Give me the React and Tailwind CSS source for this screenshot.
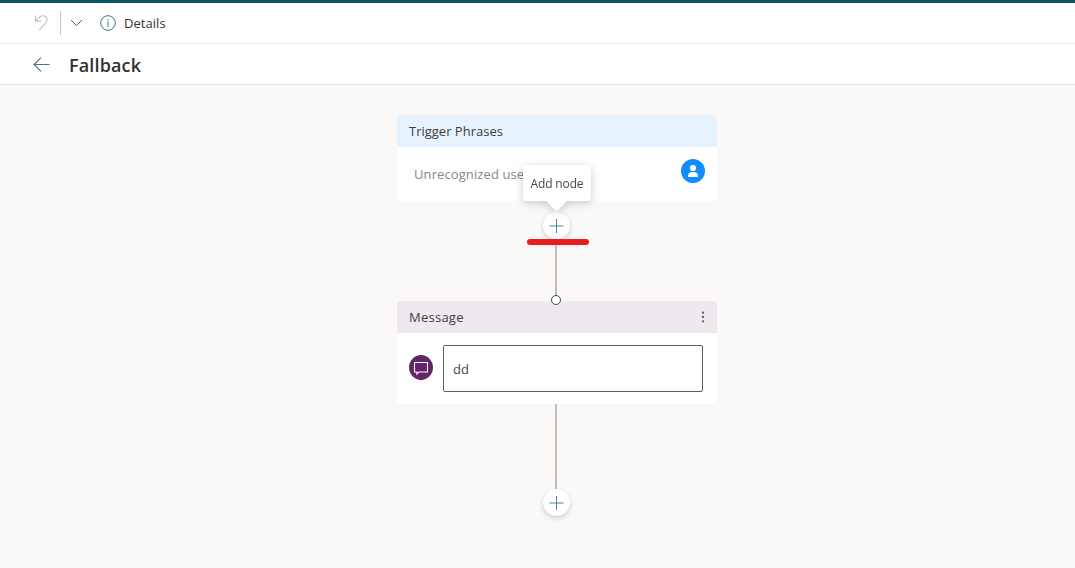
import React from 'react';

function UndoIcon() {
  return (
    <svg className="h-[18px] w-[16px]" viewBox="0 0 16 18" fill="none" stroke="#c4c2c0" strokeWidth="1.2">
      <path d="M1.500 1.500v5.700h5.700M1.800 6.900 5.600 3.100c1.700-1.700 4.500-1.800 6.200-.2s1.800 4.300.1 6L5.200 16" />
    </svg>
  );
}

function PlusButton() {
  return (
    <button className="flex h-[27px] w-[27px] shrink-0 items-center justify-center rounded-full bg-white shadow-[0_2px_5px_rgba(0,0,0,0.18)]">
      <svg className="h-[15px] w-[15px]" viewBox="0 0 15 15" fill="none">
        <path d="M0.500 8h14" stroke="#a5c4ce" strokeWidth="2" />
        <path d="M7.500 1v14" stroke="#43899e" strokeWidth="1" />
      </svg>
    </button>
  );
}

function Tooltip() {
  return (
    <div className="absolute bottom-[38px] -left-[20px] z-10 flex h-9 w-[68px] items-center justify-center rounded-sm bg-white drop-shadow-[0_2px_4px_rgba(0,0,0,0.2)]">
      <span className="pt-[2px] text-[12px] tracking-[-0.15px] whitespace-nowrap text-[#484644]">Add node</span>
      <svg className="absolute top-[35px] left-[22px] h-[12px] w-[23px]" viewBox="0 0 23 12">
        <path d="M0 0h23L11.500 11.500Z" fill="#fff" />
      </svg>
    </div>
  );
}

function TriggerCard() {
  return (
    <section className="w-[320px] overflow-hidden rounded-t-sm bg-white">
      <header className="flex h-8 items-center bg-[#e6f2fe] px-3 pt-[2px] text-[13px] text-[#3f3e3c]">Trigger Phrases</header>
      <div className="flex h-[54px] items-start justify-between pr-3 pl-[17px]">
        <span className="mt-[17px] text-[13px] leading-5 tracking-[0.1px] text-[#8a8886]">Unrecognized user</span>
        <svg className="mt-3 h-6 w-6" viewBox="0 0 24 24">
          <circle cx="12" cy="12" r="12" fill="#118dff" />
          <circle cx="12" cy="9" r="3.100" fill="#fff" />
          <path d="M7 18v-1c0-2.500 1.800-4 4-4h2c2.200 0 4 1.500 4 4v1Z" fill="#fff" />
        </svg>
      </div>
    </section>
  );
}

function MessageCard() {
  return (
    <section className="relative w-[320px] bg-white">
      <span className="absolute -top-[6px] left-[154px] h-[10px] w-[10px] rounded-full border border-[#484644] bg-white" />
      <header className="flex h-8 items-center justify-between rounded-t-sm bg-[#efe8ef] px-3 text-[13px] text-[#3f3e3c]">
        <span className="pt-[2px] tracking-[0.25px]">Message</span>
        <svg className="h-[12px] w-[4px]" viewBox="0 0 4 12" fill="#605e5c">
          <circle cx="2" cy="1.700" r="1.150" />
          <circle cx="2" cy="6" r="1.150" />
          <circle cx="2" cy="10.300" r="1.150" />
        </svg>
      </header>
      <div className="flex h-[71px] items-start gap-[10px] pt-3 pl-3">
        <svg className="mt-[10px] h-[25px] w-6" viewBox="0 0 24 25" fill="none">
          <ellipse cx="12" cy="12.500" rx="12" ry="12.500" fill="#642469" />
          <path d="M5.500 7.500h13v9.500h-8.500l-2 2.200V17H5.500Z" stroke="#fff" strokeWidth="1.100" />
        </svg>
        <div className="flex h-[47px] w-[260px] items-center rounded-xs border border-[#605e5c] px-[9px] pt-[2px] text-[13px] text-[#484644]">dd</div>
      </div>
    </section>
  );
}

export default function App() {
  return (
    <div className="flex h-[568px] w-[1075px] flex-col overflow-hidden bg-[#faf9f8] font-['Open_Sans','Noto_Sans',sans-serif] text-[#323130]">
      <div className="flex h-11 shrink-0 items-center border-t-[3px] border-b border-t-[#0b556a] border-b-[#edebe9] bg-white pl-[34px]">
        <UndoIcon />
        <span className="ml-[10px] h-6 w-px bg-[#c8c6c4]" />
        <svg className="ml-[9px] h-[8px] w-[13px]" viewBox="0 0 13 8" fill="none" stroke="#73642f">
          <path d="m1 1 5.500 5.500L12 1" />
        </svg>
        <svg className="ml-[17px] h-4 w-4" viewBox="0 0 16 16" fill="none" stroke="#3a7288">
          <circle cx="8" cy="8" r="7.300" />
          <path d="M8 6.500v5.500M8 4v1.300" />
        </svg>
        <span className="ml-2 pt-[2px] text-[13px] tracking-[0.05px]">Details</span>
      </div>
      <div className="flex h-[41px] shrink-0 items-center border-b border-[#e6e4e2] bg-white pl-[33px]">
        <svg className="h-[15px] w-[17px]" viewBox="0 0 17 15" fill="none" stroke="#4d707d" strokeWidth="1.100">
          <path d="M8 .7 1 7.500l7 6.800M1 7.500h15.500" />
        </svg>
        <h1 className="ml-[19px] pt-[2px] text-[18px] font-semibold tracking-[0.15px]">Fallback</h1>
      </div>
      <main className="flex flex-1 flex-col items-start pt-[30px] pl-[397px]">
        <TriggerCard />
        <div className="relative ml-[146px] flex h-[100px] w-[27px] flex-col pt-[11px]">
          <div className="relative">
            <PlusButton />
            <Tooltip />
          </div>
          <span className="-mt-px ml-[12px] h-[62px] w-[2px] bg-[#bebbb8]" />
          <span className="absolute top-[38px] -left-[16px] h-[6px] w-[62px] rounded-full bg-[#e91d1c]" />
        </div>
        <MessageCard />
        <div className="ml-[146px] flex w-[27px] flex-col">
          <span className="ml-[12px] h-[85px] w-[2px] bg-[#bebbb8]" />
          <PlusButton />
        </div>
      </main>
    </div>
  );
}
